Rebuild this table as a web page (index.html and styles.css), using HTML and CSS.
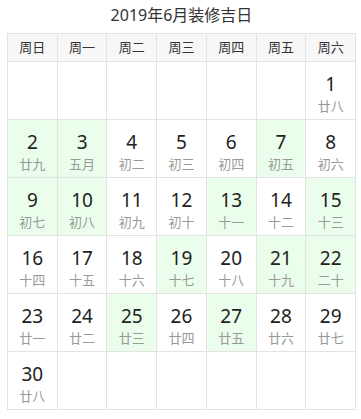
FILE: index.html
```html
<!DOCTYPE html>
<html lang="zh-CN">
<head>
	<meta charset="UTF-8">
	<title>2019年6月装修吉日</title>
	<link rel="stylesheet" href="styles.css">
</head>
<body>
	<div class="calendar">
		<h1>2019年6月装修吉日</h1>
		<div class="grid">
			<div class="wk">周日</div>
			<div class="wk">周一</div>
			<div class="wk">周二</div>
			<div class="wk">周三</div>
			<div class="wk">周四</div>
			<div class="wk">周五</div>
			<div class="wk">周六</div>

			<div class="day"></div>
			<div class="day"></div>
			<div class="day"></div>
			<div class="day"></div>
			<div class="day"></div>
			<div class="day"></div>
			<div class="day"><b>1</b><span>廿八</span></div>

			<div class="day good"><b>2</b><span>廿九</span></div>
			<div class="day good"><b>3</b><span>五月</span></div>
			<div class="day"><b>4</b><span>初二</span></div>
			<div class="day"><b>5</b><span>初三</span></div>
			<div class="day"><b>6</b><span>初四</span></div>
			<div class="day good"><b>7</b><span>初五</span></div>
			<div class="day"><b>8</b><span>初六</span></div>

			<div class="day good"><b>9</b><span>初七</span></div>
			<div class="day good"><b>10</b><span>初八</span></div>
			<div class="day"><b>11</b><span>初九</span></div>
			<div class="day"><b>12</b><span>初十</span></div>
			<div class="day good"><b>13</b><span>十一</span></div>
			<div class="day"><b>14</b><span>十二</span></div>
			<div class="day good"><b>15</b><span>十三</span></div>

			<div class="day"><b>16</b><span>十四</span></div>
			<div class="day"><b>17</b><span>十五</span></div>
			<div class="day"><b>18</b><span>十六</span></div>
			<div class="day good"><b>19</b><span>十七</span></div>
			<div class="day"><b>20</b><span>十八</span></div>
			<div class="day good"><b>21</b><span>十九</span></div>
			<div class="day good"><b>22</b><span>二十</span></div>

			<div class="day"><b>23</b><span>廿一</span></div>
			<div class="day"><b>24</b><span>廿二</span></div>
			<div class="day good"><b>25</b><span>廿三</span></div>
			<div class="day"><b>26</b><span>廿四</span></div>
			<div class="day good"><b>27</b><span>廿五</span></div>
			<div class="day"><b>28</b><span>廿六</span></div>
			<div class="day"><b>29</b><span>廿七</span></div>

			<div class="day"><b>30</b><span>廿八</span></div>
			<div class="day"></div>
			<div class="day"></div>
			<div class="day"></div>
			<div class="day"></div>
			<div class="day"></div>
			<div class="day"></div>
		</div>
	</div>
</body>
</html>
```

FILE: styles.css
```css
*{margin:0; padding:0; font-family:"Noto Sans","Noto Sans CJK SC",sans-serif;}
body{background:#fff;}
.calendar{
	width:349px;
	margin-left:7px;
}
.calendar h1{
	height:33px;
	line-height:31px;
	text-align:center;
	font-size:16px;
	font-weight:normal;
	color:#333;
}
.grid{
	display:grid;
	grid-template-columns:repeat(7,1fr);
	gap:1px;
	padding:1px;
	background:#e3e3e3;
}
.wk{
	height:27px;
	line-height:27px;
	text-align:center;
	font-size:13px;
	color:#333;
	background:#f7f7f7;
}
.day{
	height:57px;
	background:#fff;
	text-align:center;
}
.day.good{background:#ebfeeb;}
.day b{
	display:block;
	padding-top:10px;
	line-height:24px;
	font-size:19px;
	font-weight:normal;
	color:#222;
}
.day span{
	display:block;
	line-height:20px;
	font-size:13px;
	color:#999;
}
```
